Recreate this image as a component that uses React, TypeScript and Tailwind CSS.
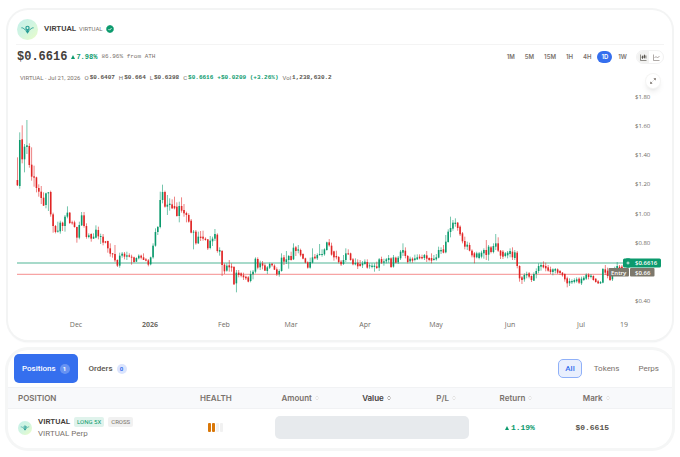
import { useState } from 'react';

type Candle = [dir: 1 | 0, high: number, low: number, top: number, bottom: number];

interface Batch {
  base: number;
  candles: Candle[];
}

// Values are vertical positions in thirds of a chart unit, 1 = up, 0 = down
const batches: Batch[] = [
  {
    base: 45,
    candles: [
      [0, 172, 258, 240, 256], [1, 97, 266, 120, 258], [0, 76, 190, 118, 178], [1, 132, 217, 140, 178],
      [1, 60, 162, 136, 141], [0, 130, 203, 138, 195], [0, 142, 242, 194, 230], [0, 197, 260, 229, 233],
      [0, 230, 277, 232, 264], [0, 253, 290, 264, 275], [0, 258, 312, 275, 294], [0, 277, 318, 293, 317],
      [1, 278, 325, 280, 315], [1, 276, 333, 277, 280], [0, 272, 350, 276, 343], [0, 338, 398, 343, 378],
      [0, 375, 400, 378, 396], [1, 365, 398, 392, 395], [1, 362, 401, 368, 394], [0, 365, 393, 368, 378],
      [1, 345, 395, 350, 378], [1, 319, 355, 338, 350], [0, 336, 372, 338, 369], [0, 362, 374, 367, 370],
      [0, 362, 383, 367, 381], [0, 380, 428, 381, 413], [1, 365, 418, 375, 413], [1, 336, 378, 346, 376],
      [0, 336, 383, 346, 378], [0, 370, 416, 378, 411], [1, 400, 415, 406, 411], [0, 400, 425, 402, 416],
      [1, 400, 417, 410, 416], [1, 376, 415, 389, 413], [0, 380, 418, 390, 409], [1, 401, 432, 408, 411],
      [0, 402, 436, 410, 428], [0, 423, 430, 424, 428], [0, 422, 458, 423, 445], [0, 430, 470, 445, 461],
      [0, 459, 473, 460, 463], [0, 435, 486, 462, 481], [0, 478, 501, 480, 497], [1, 458, 503, 467, 497],
      [1, 456, 473, 461, 467], [0, 456, 478, 461, 470], [1, 455, 480, 466, 470], [0, 460, 472, 466, 470],
      [0, 464, 494, 470, 473], [0, 470, 488, 472, 486], [1, 472, 486, 474, 485], [1, 463, 478, 467, 475],
      [0, 464, 478, 467, 473], [0, 460, 480, 472, 480], [0, 474, 484, 478, 482], [0, 477, 499, 481, 494],
      [1, 470, 496, 472, 493], [1, 430, 476, 437, 472], [1, 385, 440, 396, 437], [1, 378, 405, 381, 396],
      [1, 275, 385, 300, 381], [1, 254, 310, 276, 300], [0, 272, 323, 276, 320],
    ],
  },
  {
    base: 255,
    candles: [
      [1, 75, 135, 104, 110], [1, 85, 122, 101, 105], [0, 88, 117, 103, 115], [0, 80, 118, 108, 115],
      [0, 97, 140, 110, 138], [1, 95, 157, 108, 138], [0, 82, 128, 108, 122], [0, 102, 140, 120, 130],
      [0, 125, 157, 129, 135], [0, 130, 158, 135, 155], [0, 147, 190, 152, 188], [1, 180, 238, 185, 188],
      [0, 180, 224, 185, 220], [1, 185, 222, 200, 220], [0, 183, 213, 200, 204], [0, 182, 212, 200, 206],
      [0, 202, 212, 206, 210], [0, 207, 240, 208, 235], [1, 198, 238, 212, 234], [1, 200, 228, 206, 214],
      [1, 177, 213, 192, 206], [0, 190, 248, 194, 243], [1, 232, 257, 240, 245], [0, 240, 318, 243, 285],
      [0, 280, 312, 284, 304], [1, 280, 305, 287, 302], [0, 270, 305, 286, 292], [0, 280, 305, 289, 293],
      [0, 288, 345, 291, 343], [1, 300, 367, 308, 340], [0, 300, 322, 308, 315], [0, 307, 322, 310, 317],
      [0, 308, 330, 316, 322], [0, 317, 330, 320, 325], [0, 318, 337, 322, 335], [1, 302, 337, 312, 333],
      [1, 300, 328, 305, 313], [1, 262, 310, 266, 305], [0, 262, 298, 267, 293], [1, 272, 300, 280, 292],
      [0, 273, 298, 280, 287], [0, 280, 303, 286, 302], [1, 288, 312, 292, 303], [1, 278, 297, 282, 293],
      [0, 280, 290, 281, 286], [0, 283, 300, 287, 299], [0, 292, 318, 298, 313], [1, 298, 320, 303, 313],
      [1, 250, 305, 263, 303], [0, 255, 285, 262, 275], [1, 243, 282, 268, 276], [1, 255, 296, 258, 270],
      [0, 245, 272, 258, 270], [1, 220, 270, 233, 268], [0, 228, 258, 232, 243], [1, 225, 250, 238, 242],
      [0, 236, 260, 240, 256], [0, 250, 268, 252, 266], [0, 263, 280, 265, 278], [0, 274, 296, 277, 293],
      [1, 263, 296, 276, 293],
    ],
  },
  {
    base: 345,
    candles: [
      [1, 145, 190, 172, 188], [0, 162, 178, 170, 175], [1, 160, 180, 165, 175], [1, 132, 167, 162, 165],
      [1, 148, 170, 162, 165], [1, 145, 167, 148, 163], [1, 125, 152, 127, 150], [0, 117, 140, 127, 136],
      [0, 128, 167, 137, 164], [0, 152, 182, 154, 172], [0, 152, 178, 168, 172], [0, 168, 190, 171, 186],
      [0, 180, 198, 185, 193], [1, 165, 195, 180, 192], [1, 145, 186, 160, 180], [0, 148, 165, 160, 163],
      [0, 158, 182, 160, 180], [0, 174, 196, 178, 193], [1, 175, 196, 189, 193], [0, 178, 207, 188, 199],
      [0, 180, 200, 192, 198], [1, 183, 204, 190, 196], [1, 178, 194, 185, 192], [0, 178, 206, 186, 203],
      [1, 190, 206, 196, 199], [1, 190, 205, 197, 201], [1, 190, 215, 197, 201], [0, 185, 207, 199, 204],
      [1, 174, 213, 178, 203], [0, 170, 192, 177, 188], [1, 176, 197, 184, 188], [1, 174, 190, 178, 184],
      [1, 165, 188, 174, 180], [0, 172, 204, 175, 201], [1, 165, 203, 172, 200], [0, 170, 190, 173, 188],
      [1, 168, 192, 173, 187], [1, 150, 180, 155, 175], [1, 130, 168, 150, 158], [0, 142, 175, 152, 168],
      [0, 165, 190, 168, 186], [1, 170, 188, 176, 184], [0, 172, 188, 176, 182], [1, 164, 184, 175, 180],
      [1, 163, 180, 172, 178], [0, 163, 178, 170, 175], [0, 164, 178, 171, 175], [1, 162, 180, 165, 174],
      [0, 153, 186, 166, 176], [0, 172, 184, 174, 180], [0, 160, 190, 174, 182], [1, 165, 182, 176, 180],
      [1, 162, 182, 172, 178], [1, 140, 175, 150, 173], [1, 142, 162, 150, 154], [0, 135, 160, 148, 158],
      [1, 105, 160, 125, 157], [1, 88, 128, 95, 126], [1, 50, 112, 84, 96], [1, 60, 92, 68, 86],
      [1, 55, 80, 68, 72], [0, 66, 92, 68, 84], [0, 76, 108, 80, 103], [0, 96, 130, 100, 124],
      [0, 110, 148, 123, 140], [1, 125, 150, 134, 140], [0, 128, 154, 135, 152], [0, 148, 172, 152, 166],
      [0, 156, 190, 160, 172], [1, 155, 175, 160, 172], [1, 156, 178, 160, 174], [1, 152, 175, 158, 170],
      [1, 145, 176, 150, 160], [0, 120, 180, 150, 165], [1, 135, 182, 140, 164], [0, 138, 160, 142, 156],
      [1, 130, 160, 138, 156], [1, 102, 150, 130, 140], [0, 112, 156, 130, 152], [0, 150, 177, 152, 167],
      [0, 150, 177, 155, 170], [1, 156, 172, 160, 168], [1, 153, 175, 158, 166], [1, 145, 172, 153, 162],
      [0, 142, 180, 155, 172], [1, 150, 180, 157, 174], [0, 153, 205, 158, 198], [0, 196, 245, 198, 235],
      [0, 228, 252, 232, 240], [1, 220, 245, 225, 238], [1, 215, 235, 222, 226], [0, 216, 235, 220, 230],
      [0, 226, 246, 228, 240], [1, 217, 243, 222, 242], [1, 205, 235, 213, 222], [1, 190, 220, 198, 213],
      [1, 188, 212, 195, 200], [0, 184, 205, 195, 202], [0, 188, 214, 198, 205], [0, 195, 215, 202, 212],
      [0, 200, 222, 208, 216], [1, 205, 226, 208, 216], [1, 204, 220, 207, 212], [0, 205, 222, 208, 218],
      [0, 210, 225, 213, 219], [0, 216, 230, 218, 226], [0, 220, 245, 222, 238], [0, 230, 262, 235, 250],
      [1, 235, 258, 243, 250], [1, 238, 252, 243, 247], [1, 235, 250, 240, 246], [1, 232, 248, 238, 244],
      [0, 232, 252, 236, 248], [1, 230, 255, 236, 250], [1, 228, 243, 233, 240], [1, 220, 240, 224, 236],
      [0, 220, 238, 224, 231], [1, 222, 235, 227, 231], [0, 226, 242, 228, 240], [0, 235, 248, 236, 246],
      [0, 240, 252, 244, 250], [1, 243, 252, 246, 250], [1, 204, 250, 207, 248], [0, 195, 225, 208, 218],
      [0, 203, 235, 212, 228], [0, 220, 243, 226, 240], [1, 215, 243, 220, 238], [1, 200, 228, 206, 220],
      [1, 186, 215, 198, 206], [0, 195, 212, 200, 206], [0, 195, 208, 200, 204],
    ],
  },
];

const candles = batches.flatMap((b) =>
  b.candles.map(([dir, ...ys]) => {
    const [high, low, top, bottom] = ys.map((y) => (y + b.base) / 3);
    return { up: dir === 1, high, low, top, bottom };
  })
);

const prices = ['$1.80', '$1.60', '$1.40', '$1.20', '$1.00', '$0.80', '', '$0.40'];

const months = [
  { label: 'Dec', x: 59 },
  { label: '2026', x: 133, bold: true },
  { label: 'Feb', x: 207 },
  { label: 'Mar', x: 274 },
  { label: 'Apr', x: 348 },
  { label: 'May', x: 419 },
  { label: 'Jun', x: 493 },
  { label: 'Jul', x: 564 },
  { label: '19', x: 607 },
];

const timeframes = ['1M', '5M', '15M', '1H', '4H', '1D', '1W'];

function TokenLogo({ className }: { className: string }) {
  return (
    <svg viewBox="0 0 42 42" className={className} aria-hidden="true">
      <defs>
        <linearGradient id="logo-bg" x1="0" y1="0" x2="1" y2="1">
          <stop offset="0" stopColor="#c3f0ea" />
          <stop offset="0.5" stopColor="#d2f5e0" />
          <stop offset="1" stopColor="#eafdc8" />
        </linearGradient>
      </defs>
      <circle cx="21" cy="21" r="21" fill="url(#logo-bg)" />
      <g fill="none" stroke="#269c95" strokeWidth="2" strokeLinecap="round">
        <path d="M9.500 17.500c4-.5 4.500 3.500 9 5.500M32.500 17.500c-4-.5-4.500 3.500-9 5.500" strokeWidth="1.800" />
        <ellipse cx="21" cy="18" rx="3.200" ry="3.500" strokeWidth="2.400" />
        <path d="M18.500 24l2.500 3.500 2.500-3.500M21 22v4" strokeWidth="2.400" />
      </g>
    </svg>
  );
}

function SortIcon({ active }: { active?: boolean }) {
  return (
    <svg viewBox="0 0 8 10" className={`w-1 h-[6px] ${active ? 'text-stone-500' : 'text-stone-300'}`} aria-hidden="true">
      <path d="M1 4l3-3 3 3M1 6l3 3 3-3" fill="none" stroke="currentColor" strokeWidth="1.2" />
    </svg>
  );
}

function PriceChart() {
  return (
    <svg viewBox="0 0 648 250" className="block w-full h-auto font-['Open_Sans',sans-serif]" role="img" aria-label="VIRTUAL">
      <g transform="translate(1 0)">
        <rect x={0} y={177.4} width={608} height={1.2} fill="#0b9a6d" opacity={0.6} />
        <rect x={0} y={188.8} width={593} height={1} fill="#ef4444" opacity={0.6} />
        {candles.map((c, i) => {
          const x = 0.4 + i * 2.38;
          const color = c.up ? '#0b9a6d' : '#e02424';
          return (
            <g key={i} fill={color}>
              <rect x={x - 0.4} y={c.high} width={0.8} height={c.low - c.high} opacity={0.7} />
              <rect x={x - 0.8} y={c.top} width={1.6} height={Math.max(c.bottom - c.top, 0.8)} />
            </g>
          );
        })}

        <g fill="#6f6c65">
          <g fontSize={6}>
            {prices.map((p, i) => (
              <text key={i} x={618} y={14 + i * 29.15}>
                {p}
              </text>
            ))}
          </g>
          <g fontSize={7} textAnchor="middle">
            {months.map((m) => (
              <text key={m.label} x={m.x} y={242} fontWeight={m.bold ? 700 : 400}>
                {m.label}
              </text>
            ))}
          </g>
        </g>

        <g fill="#7d786c">
          <rect x={591.5} y={183} width={20.5} height={8.5} rx={1} />
          <rect x={613} y={183} width={24.5} height={8.5} rx={1} />
        </g>
        <rect x={606} y={173.5} width={38} height={9} rx={1.5} fill="#0b9a6d" />
        <circle cx={611} cy={178} r={4.7} fill="#0b9a6d" />
        <path d="M609.5 178h3M611 176.5v3" stroke="#fff" strokeWidth={0.8} />
        <g fontSize={6} fill="#fff" fontWeight={600}>
          <text x={618} y={180.2}>$0.6616</text>
          <text x={594} y={189.5}>Entry</text>
          <text x={618} y={189.5}>$0.66</text>
        </g>
      </g>
    </svg>
  );
}

function Stat({ label, value, up }: { label: string; value: string; up?: boolean }) {
  return (
    <span className="flex items-center gap-px">
      <span>{label}</span>
      <span className={`font-['Liberation_Mono',monospace] font-bold ${up ? 'text-[#0b9a6d]' : 'text-stone-600'}`}>{value}</span>
    </span>
  );
}

export default function App() {
  const [frame, setFrame] = useState('1D');
  const [tab, setTab] = useState('Positions');
  const [filter, setFilter] = useState('All');

  return (
    <div className="min-h-screen bg-white px-2 pt-[10px] font-['Roboto',sans-serif] text-stone-500">
      <section className="relative rounded-[20px] bg-white px-2 pb-[5px] ring-2 ring-[#f3f4f4] shadow-[0_2px_2px_0_#e6e8ea]">
        <header className="flex items-center h-[35px] pt-1 pl-px border-b border-[#f4f4f4]">
          <TokenLogo className="w-[21px] h-[21px]" />
          <h1 className="ml-[6px] text-[8px] leading-3 font-semibold text-stone-700">VIRTUAL</h1>
          <span className="ml-[3px] text-[6px] leading-3">VIRTUAL</span>
          <svg viewBox="0 0 16 16" className="ml-[3px] w-2 h-2" aria-hidden="true">
            <path
              fill="#0b9a6d"
              d="M8 0l2.200 1 2.400.4 1 2.200L15.500 5.600 15.300 8l.2 2.400-1.900 2-1 2.200-2.400.4L8 16l-2.200-1-2.400-.4-1-2.200-1.900-2L.7 8 .5 5.600l1.900-2 1-2.200L5.800 1z"
            />
            <path d="M5 8.200l2.100 2.100L11 6.200" fill="none" stroke="#fff" strokeWidth="1.700" />
          </svg>
        </header>

        <div className="flex items-center h-6 pl-px">
          <span className="font-['Liberation_Mono',monospace] text-[12px] leading-4 font-bold text-stone-700">$0.6616</span>
          <span className="ml-1 flex items-center font-['Liberation_Mono',monospace] text-[7px] leading-3 font-bold text-[#0b9a6d]">
            <svg viewBox="0 0 4 4" className="w-1 h-1 mr-px" aria-hidden="true">
              <path d="M2 0l2 4H0z" fill="currentColor" />
            </svg>
            7.98%
          </span>
          <span className="ml-1 font-['Liberation_Mono',monospace] text-[6px] leading-3">86.96% from ATH</span>

          <div className="ml-auto flex items-center gap-[2px] font-['Inter',sans-serif]">
            {timeframes.map((t) => (
              <button
                key={t}
                onClick={() => setFrame(t)}
                className={`h-3 px-1 rounded-full text-[6px] leading-3 font-semibold ${frame === t ? 'bg-[#356fee] text-white' : ''}`}
              >
                {t}
              </button>
            ))}
          </div>
          <div className="ml-[5px] flex items-center h-[14px] rounded-full border border-[#f2f2f2] overflow-hidden">
            <button aria-label="Candles" className="w-3 h-3 flex items-center justify-center bg-[#f2f2f1] text-stone-600">
              <svg viewBox="0 0 14 14" className="w-[7px] h-[7px]" fill="none" stroke="currentColor" strokeWidth="1.3">
                <path d="M1 1v12h12M5 3v7M9 1v8M12 3v6" />
                <path d="M4 5h2v3H4zM8 3h2v4H8z" fill="currentColor" />
              </svg>
            </button>
            <button aria-label="Line" className="w-[14px] h-3 flex items-center justify-center">
              <svg viewBox="0 0 14 14" className="w-[7px] h-[7px]" fill="none" stroke="currentColor" strokeWidth="1.2">
                <path d="M1 1v12h12M3 8l3-3 3 3 4-4" />
              </svg>
            </button>
          </div>
        </div>

        <div className="flex items-center h-4 pt-px pl-1 gap-1 text-[6px] leading-3">
          <span>VIRTUAL · Jul 21, 2026</span>
          <Stat label="O" value="$0.6407" />
          <Stat label="H" value="$0.664" />
          <Stat label="L" value="$0.6398" />
          <Stat label="C" value="$0.6616" up />
          <span className="font-['Liberation_Mono',monospace] font-bold text-[#0b9a6d]">+$0.0209 (+3.26%)</span>
          <Stat label="Vol" value="1,238,630.2" />
        </div>

        <button
          aria-label="Expand"
          className="absolute right-3 top-16 w-[14px] h-[14px] rounded-full bg-white ring-1 ring-stone-100 shadow-md flex items-center justify-center"
        >
          <svg viewBox="0 0 12 12" className="w-[6px] h-[6px]" fill="none" stroke="currentColor" strokeWidth="1.500">
            <path d="M7.500 1H11v3.500M11 1L7.500 4.500M4.500 11H1V7.500M1 11l3.500-3.500" />
          </svg>
        </button>

        <PriceChart />
      </section>

      <section className="mt-[10px] pb-px rounded-[20px] bg-white overflow-hidden ring-[3px] ring-[#f5f6f6]">
        <div className="flex items-center h-[37px] px-[6px]">
          <button
            onClick={() => setTab('Positions')}
            className={`h-[29px] px-2 rounded-[5px] flex items-center gap-1 text-[8px] leading-3 font-medium ${tab === 'Positions' ? 'bg-[#356fee] text-white' : 'text-stone-600'}`}
          >
            Positions
            <span className="w-[10px] h-[10px] rounded-full bg-white/25 text-[6px] leading-[10px] font-bold text-center">1</span>
          </button>
          <button
            onClick={() => setTab('Orders')}
            className={`h-[29px] px-[11px] rounded-[5px] flex items-center gap-1 text-[8px] leading-3 font-medium ${tab === 'Orders' ? 'bg-[#356fee] text-white' : 'text-stone-600'}`}
          >
            Orders
            <span className="w-[10px] h-[10px] rounded-full bg-[#dbe4fd] text-[#356fee] text-[6px] leading-[10px] font-bold text-center">0</span>
          </button>
          <div className="ml-auto flex items-center gap-[5px]">
            {['All', 'Tokens', 'Perps'].map((f) => (
              <button
                key={f}
                onClick={() => setFilter(f)}
                className={`h-[19px] px-[6px] rounded-[5px] border text-[8px] leading-3 ${filter === f ? 'border-[#8fb0f8] bg-[#e9effd] text-[#356fee] font-medium' : 'border-transparent'}`}
              >
                {f}
              </button>
            ))}
          </div>
        </div>

        <table className="w-full table-fixed text-[8px] leading-3">
          <colgroup>
            <col className="w-[24%]" />
            <col className="w-[14%]" />
            <col className="w-[12%]" />
            <col className="w-[11%]" />
            <col className="w-[10%]" />
            <col className="w-[11%]" />
            <col />
          </colgroup>
          <thead className="font-['Inter',sans-serif]">
            <tr className="h-[21px] bg-[#f8f9fb] border-y border-[#f1f2f4]">
              <th className="pl-[10px] text-left font-semibold">POSITION</th>
              <th className="pl-1 font-semibold">HEALTH</th>
              {['Amount', 'Value', 'P/L', 'Return', 'Mark'].map((h) => (
                <th key={h} className={`font-semibold ${h === 'Mark' ? 'pr-8' : ''}`}>
                  <button className={`inline-flex items-center gap-[3px] ${h === 'Value' ? 'text-stone-700' : ''}`}>
                    {h}
                    <SortIcon active={h === 'Value'} />
                  </button>
                </th>
              ))}
            </tr>
          </thead>
          <tbody>
            <tr className="h-[38px]">
              <td className="pl-[10px]">
                <div className="flex items-center gap-[6px]">
                  <TokenLogo className="w-[14px] h-[14px]" />
                  <div>
                    <div className="flex items-center gap-1">
                      <span className="font-semibold text-stone-700">VIRTUAL</span>
                      <span className="px-[3px] rounded-[2px] bg-[#e0f3ec] text-[6px] leading-[10px] text-[#0b9a6d]">LONG 5X</span>
                      <span className="px-[3px] rounded-[2px] bg-[#f1f1f1] text-[6px] leading-[10px]">CROSS</span>
                    </div>
                    <div>VIRTUAL Perp</div>
                  </div>
                </div>
              </td>
              <td className="pl-1">
                <div className="flex justify-center gap-px">
                  <span className="w-[3px] h-[9px] rounded-[1px] bg-[#d97708]" />
                  <span className="w-[3px] h-[9px] rounded-[1px] bg-[#d97708]" />
                  <span className="w-[3px] h-[9px] rounded-[1px] bg-[#f1f1f1]" />
                  <span className="w-[3px] h-[9px] rounded-[1px] bg-[#f1f1f1]" />
                </div>
              </td>
              <td colSpan={3} className="pl-[15px] pr-[10px]">
                <div className="h-[23px] rounded-[5px] bg-[#e7eaed]" />
              </td>
              <td className="pl-2 text-center font-['Liberation_Mono',monospace] font-bold text-[#0b9a6d]">
                <span className="inline-flex items-center gap-[2px]">
                  <svg viewBox="0 0 4 4" className="w-1 h-1" aria-hidden="true">
                    <path d="M2 0l2 4H0z" fill="currentColor" />
                  </svg>
                  1.19%
                </span>
              </td>
              <td className="pr-10 text-center font-['Liberation_Mono',monospace] font-bold text-stone-600">$0.6615</td>
            </tr>
          </tbody>
        </table>
      </section>
    </div>
  );
}
